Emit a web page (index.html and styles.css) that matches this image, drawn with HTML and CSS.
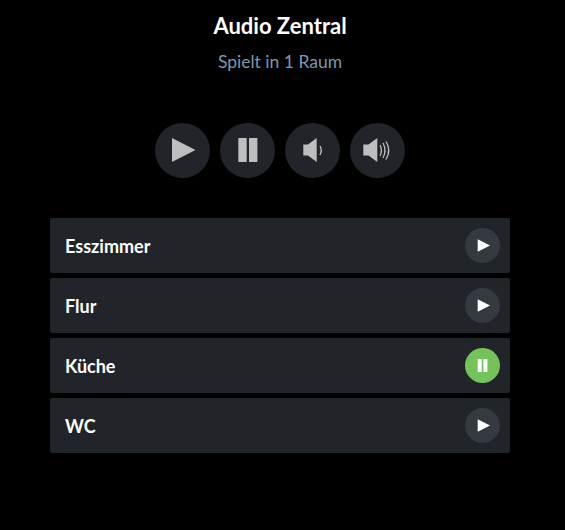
FILE: index.html
```html
<!DOCTYPE html>
<html lang="en">
<head>
  <meta charset="UTF-8" />
  <meta name="viewport" content="width=device-width, initial-scale=1.0"/>
  <title>Audio Zentral</title>
  <link rel="stylesheet" href="styles.css">
</head>
<body>

  <!-- Header -->
  <div class="header">
    <h1>Audio Zentral</h1>
    <div class="status">Spielt in 1 Raum</div>
  </div>

  <!-- Main controls -->
  <div class="controls">
    <button class="control">
      <svg width="55" height="55" viewBox="0 0 55 55"><path d="M17 15 L40.500 27 L17 39 Z"/></svg>
    </button>
    <button class="control">
      <svg width="55" height="55" viewBox="0 0 55 55"><rect x="18.300" y="15" width="8.400" height="24" rx="0.5"/><rect x="29" y="15" width="8.400" height="24" rx="0.5"/></svg>
    </button>
    <button class="control">
      <svg width="55" height="55" viewBox="0 0 55 55">
        <path d="M18.300 21.500 H23 L31.700 15 V39 L23 32.500 H18.300 Z"/>
        <path class="wave" d="M35 23 Q37.500 27.500 35 32"/>
      </svg>
    </button>
    <button class="control">
      <svg width="55" height="55" viewBox="0 0 55 55">
        <path d="M13.300 21.500 H18.500 L27.300 15 V39 L18.500 32.500 H13.300 Z"/>
        <path class="wave" d="M30 22 Q32.800 27.500 30 33"/>
        <path class="wave" d="M33 20 Q37 27.500 33 35"/>
        <path class="wave" d="M36 18.500 Q41.500 27.500 36 36.500"/>
      </svg>
    </button>
  </div>

  <!-- Rooms -->
  <div class="rooms">
    <div class="room">
      <span class="room-name">Esszimmer</span>
      <button class="room-btn">
        <svg width="35" height="35" viewBox="0 0 35 35"><path d="M12.700 11.300 L25 17.500 L12.700 23.700 Z"/></svg>
      </button>
    </div>
    <div class="room">
      <span class="room-name">Flur</span>
      <button class="room-btn">
        <svg width="35" height="35" viewBox="0 0 35 35"><path d="M12.700 11.300 L25 17.500 L12.700 23.700 Z"/></svg>
      </button>
    </div>
    <div class="room">
      <span class="room-name">Küche</span>
      <button class="room-btn playing">
        <svg width="35" height="35" viewBox="0 0 35 35"><rect x="12.700" y="11" width="4" height="13"/><rect x="18.400" y="11" width="4" height="13"/></svg>
      </button>
    </div>
    <div class="room">
      <span class="room-name">WC</span>
      <button class="room-btn">
        <svg width="35" height="35" viewBox="0 0 35 35"><path d="M12.700 11.300 L25 17.500 L12.700 23.700 Z"/></svg>
      </button>
    </div>
  </div>

</body>
</html>
```

FILE: styles.css
```css
* {
  margin: 0;
  padding: 0;
  box-sizing: border-box;
}

body {
  font-family: "Lato", "Noto Sans", sans-serif;
  background-color: #000;
  color: white;
  padding: 0 55px 0 50px;
}

.header {
  text-align: center;
  padding-top: 13px;
}

.header h1 {
  font-size: 22px;
  line-height: 26px;
  font-weight: 700;
}

.status {
  font-size: 17.5px;
  line-height: 22px;
  margin-top: 12px;
  color: #7f97ad;
}

.controls {
  display: flex;
  justify-content: center;
  gap: 10px;
  margin-top: 50px;
}

.control {
  width: 55px;
  height: 55px;
  border: none;
  border-radius: 50%;
  background-color: #212529;
  display: flex;
}

.control svg {
  fill: #bcbec0;
}

.control .wave {
  fill: none;
  stroke: #bcbec0;
  stroke-width: 1.3;
}

.rooms {
  display: flex;
  flex-direction: column;
  gap: 5px;
  margin-top: 40px;
}

.room {
  height: 55px;
  background-color: #212529;
  border-radius: 2px;
  display: flex;
  align-items: center;
  justify-content: space-between;
  padding: 0 10px 0 15px;
}

.room-name {
  font-size: 18px;
  font-weight: 700;
}

.room-btn {
  width: 35px;
  height: 35px;
  border: none;
  border-radius: 50%;
  background-color: #343a40;
  display: flex;
}

.room-btn svg {
  fill: white;
}

.room-btn.playing {
  background-color: #74c25a;
}
```
